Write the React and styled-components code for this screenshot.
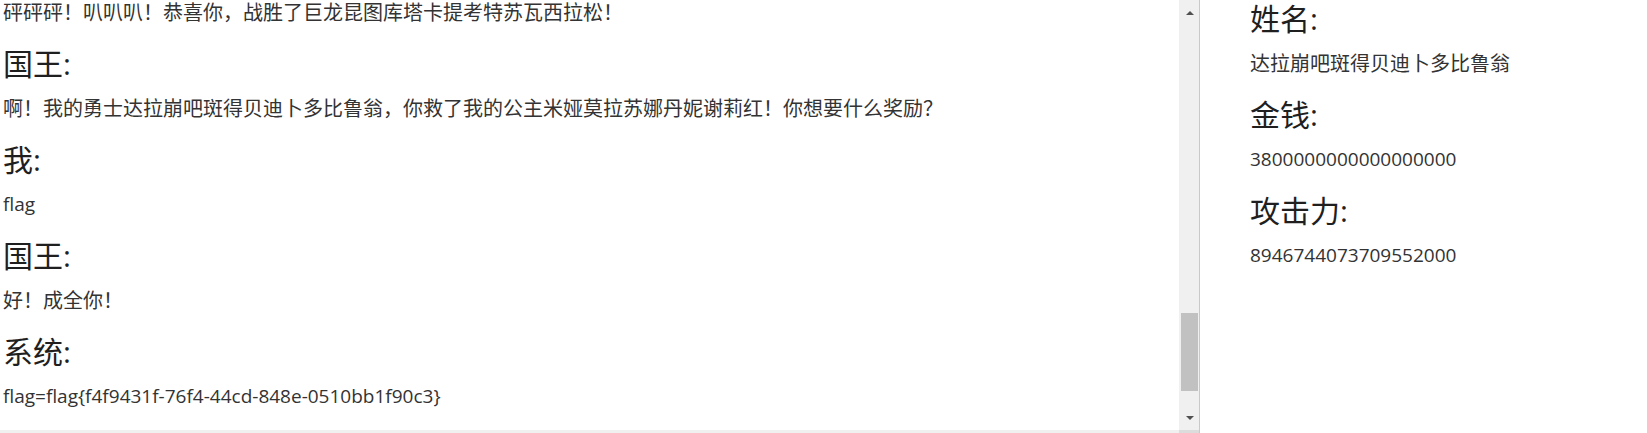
import React from "react";
import styled, { createGlobalStyle } from "styled-components";

const GlobalStyle = createGlobalStyle`
  html, body {
    margin: 0;
    padding: 0;
    height: 433px;
    overflow: hidden;
    background: #fff;
  }
  body {
    font-family: "Open Sans", "Noto Sans CJK SC", sans-serif;
    color: #333;
  }
`;

const Page = styled.div`
  display: flex;
  align-items: flex-start;
  width: 1647px;
`;

const ChatPanel = styled.div`
  width: 1199px;
  height: 450px;
  border-right: 1px solid #c9c9c9;
  display: grid;
  grid-template-columns: 1fr 20px;
  grid-template-rows: 430px 20px;
`;

const Viewport = styled.div`
  overflow: hidden;
  padding-left: 3px;
`;

// the log is scrolled to its end; offset stands for that scroll position
const ScrollContent = styled.div`
  margin-top: ${(p) => p.$offset}px;
`;

const Title = styled.h3`
  font-size: 30px;
  font-weight: 400;
  line-height: 33px;
  margin: 21px 0 15px;
  color: #1f1f1f;

  &:first-child {
    margin-top: ${(p) => (p.$top !== undefined ? p.$top : 21)}px;
  }
`;

const Line = styled.p`
  font-size: ${(p) => (p.$latin ? 19 : 20)}px;
  line-height: 27px;
  margin: 0 0 12px;
`;

const VScroll = styled.div`
  display: flex;
  flex-direction: column;
  background: #f0f0f0;
`;

const Arrow = styled.div`
  height: 25px;
  display: flex;
  align-items: center;
  justify-content: center;
  padding-left: 1px;

  &::before {
    content: "";
    width: 0;
    height: 0;
    border-left: 4px solid transparent;
    border-right: 4px solid transparent;
    ${(p) =>
      p.$down
        ? "border-top: 4px solid #505050;"
        : "border-bottom: 4px solid #505050;"}
  }
`;

const Track = styled.div`
  flex: 1;
  display: flex;
  flex-direction: column;
  justify-content: flex-end;
  padding: 0 1px 14px 2px;
`;

const Thumb = styled.div`
  height: 78px;
  background: #c1c1c1;
`;

const HScroll = styled.div`
  background: #f0f0f0;
`;

const Corner = styled.div`
  background: #dcdcdc;
`;

const InfoPanel = styled.div`
  padding-left: 50px;
`;

const isLatin = (s) => /^[\x00-\x7f]*$/.test(s);

const dialog = [
  { text: "砰砰砰！叭叭叭！恭喜你，战胜了巨龙昆图库塔卡提考特苏瓦西拉松！" },
  { who: "国王", text: "啊！我的勇士达拉崩吧斑得贝迪卜多比鲁翁，你救了我的公主米娅莫拉苏娜丹妮谢莉红！你想要什么奖励？" },
  { who: "我", text: "flag" },
  { who: "国王", text: "好！成全你！" },
  { who: "系统", text: "flag=flag{f4f9431f-76f4-44cd-848e-0510bb1f90c3}" },
];

const stats = [
  { label: "姓名", value: "达拉崩吧斑得贝迪卜多比鲁翁" },
  { label: "金钱", value: "3800000000000000000" },
  { label: "攻击力", value: "8946744073709552000" },
];

export default function App() {
  return (
    <>
      <GlobalStyle />
      <Page>
        <ChatPanel>
          <Viewport>
            <ScrollContent $offset={-1}>
              {dialog.map((d, i) => (
                <React.Fragment key={i}>
                  {d.who && <Title>{d.who}:</Title>}
                  <Line $latin={isLatin(d.text)}>{d.text}</Line>
                </React.Fragment>
              ))}
            </ScrollContent>
          </Viewport>
          <VScroll>
            <Arrow />
            <Track>
              <Thumb />
            </Track>
            <Arrow $down />
          </VScroll>
          <HScroll />
          <Corner />
        </ChatPanel>
        <InfoPanel>
          {stats.map((s, i) => (
            <React.Fragment key={s.label}>
              <Title $top={i === 0 ? 1.5 : undefined}>{s.label}:</Title>
              <Line $latin={isLatin(s.value)}>{s.value}</Line>
            </React.Fragment>
          ))}
        </InfoPanel>
      </Page>
    </>
  );
}
